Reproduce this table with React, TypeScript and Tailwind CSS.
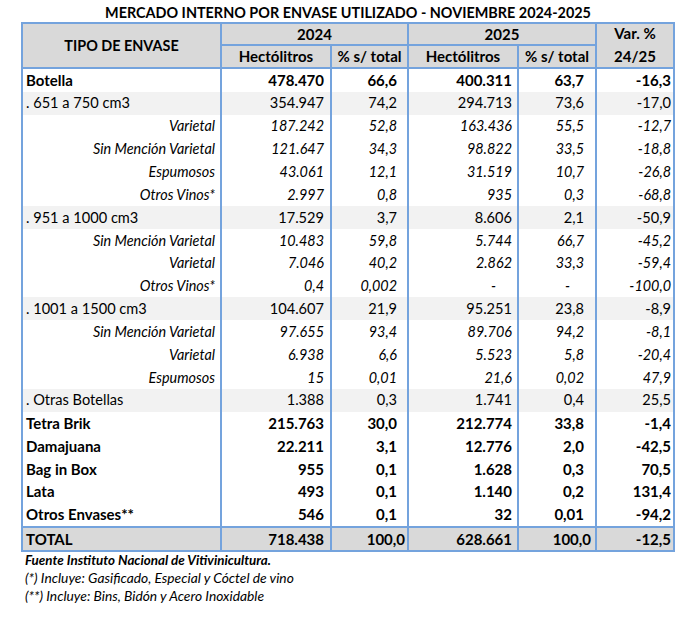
import React from "react";

type Row = { label: string; kind: "main" | "sub" | "it"; v: string[] };

const rows: Row[] = [
  { label: "Botella", kind: "main", v: ["478.470", "66,6", "400.311", "63,7", "-16,3"] },
  { label: ". 651 a 750 cm3", kind: "sub", v: ["354.947", "74,2", "294.713", "73,6", "-17,0"] },
  { label: "Varietal", kind: "it", v: ["187.242", "52,8", "163.436", "55,5", "-12,7"] },
  { label: "Sin Mención Varietal", kind: "it", v: ["121.647", "34,3", "98.822", "33,5", "-18,8"] },
  { label: "Espumosos", kind: "it", v: ["43.061", "12,1", "31.519", "10,7", "-26,8"] },
  { label: "Otros Vinos*", kind: "it", v: ["2.997", "0,8", "935", "0,3", "-68,8"] },
  { label: ". 951 a 1000 cm3", kind: "sub", v: ["17.529", "3,7", "8.606", "2,1", "-50,9"] },
  { label: "Sin Mención Varietal", kind: "it", v: ["10.483", "59,8", "5.744", "66,7", "-45,2"] },
  { label: "Varietal", kind: "it", v: ["7.046", "40,2", "2.862", "33,3", "-59,4"] },
  { label: "Otros Vinos*", kind: "it", v: ["0,4", "0,002", "-", "-", "-100,0"] },
  { label: ". 1001 a 1500 cm3", kind: "sub", v: ["104.607", "21,9", "95.251", "23,8", "-8,9"] },
  { label: "Sin Mención Varietal", kind: "it", v: ["97.655", "93,4", "89.706", "94,2", "-8,1"] },
  { label: "Varietal", kind: "it", v: ["6.938", "6,6", "5.523", "5,8", "-20,4"] },
  { label: "Espumosos", kind: "it", v: ["15", "0,01", "21,6", "0,02", "47,9"] },
  { label: ". Otras Botellas", kind: "sub", v: ["1.388", "0,3", "1.741", "0,4", "25,5"] },
  { label: "Tetra Brik", kind: "main", v: ["215.763", "30,0", "212.774", "33,8", "-1,4"] },
  { label: "Damajuana", kind: "main", v: ["22.211", "3,1", "12.776", "2,0", "-42,5"] },
  { label: "Bag in Box", kind: "main", v: ["955", "0,1", "1.628", "0,3", "70,5"] },
  { label: "Lata", kind: "main", v: ["493", "0,1", "1.140", "0,2", "131,4"] },
  { label: "Otros Envases**", kind: "main", v: ["546", "0,1", "32", "0,01", "-94,2"] },
];

const padR = ["pr-[6px]", "pr-[10px]", "pr-[5px]", "pr-[11px]", "pr-[2px]"];
const dashPad = ["pr-[6px]", "pr-[10px]", "pr-[21px]", "pr-[25px]", "pr-[2px]"];

export default function App() {
  return (
    <div className="w-[693px] h-[618px] bg-white text-black pl-[21px] pt-[3px] font-['Lato',sans-serif]">
      <div className="w-[654px] h-[19px] text-center font-bold text-[14.4px] leading-[19px]">
        MERCADO INTERNO POR ENVASE UTILIZADO - NOVIEMBRE 2024-2025
      </div>
      <div className="w-[654px] border-2 border-[#74a3dd]">
        {/* header */}
        <div className="grid grid-cols-[197px_110px_77px_110px_78px_78px] grid-rows-[22px_23px] bg-[#d9d9d9] font-bold text-[15px]">
          <div className="row-span-2 border-b-2 border-[#74a3dd] flex items-center justify-center text-[14.4px]">TIPO DE ENVASE</div>
          <div className="col-span-2 border-l-2 border-b-2 border-[#74a3dd] flex items-center justify-center">2024</div>
          <div className="col-span-2 border-l-2 border-b-2 border-[#74a3dd] flex items-center justify-center">2025</div>
          <div className="row-span-2 border-l-2 border-b-2 border-[#74a3dd] flex flex-col items-center justify-center leading-[23px] pb-[1px]">
            <span>Var. %</span>
            <span>24/25</span>
          </div>
          <div className="border-l-2 border-b-2 border-[#74a3dd] flex items-center justify-center">Hectólitros</div>
          <div className="border-l-2 border-b-2 border-[#74a3dd] flex items-center justify-center">% s/ total</div>
          <div className="border-l-2 border-b-2 border-[#74a3dd] flex items-center justify-center">Hectólitros</div>
          <div className="border-l-2 border-b-2 border-[#74a3dd] flex items-center justify-center">% s/ total</div>
        </div>
        {/* body */}
        {rows.map((r, i) => {
          const text =
            r.kind === "main"
              ? "font-bold text-[15px]"
              : r.kind === "sub"
              ? "text-[14.6px]"
              : "italic text-[14.4px]";
          const bg = r.kind === "sub" ? "bg-[#f2f2f2]" : "bg-white";
          return (
            <div
              key={i}
              className={`grid grid-cols-[197px_110px_77px_110px_78px_78px] h-[22.85px] ${bg} ${text}`}
            >
              <div
                className={`flex items-center ${
                  r.kind === "it" ? "justify-end pr-[5px]" : "justify-start pl-[3px]"
                }`}
              >
                {r.label}
              </div>
              {r.v.map((v, j) => (
                <div
                  key={j}
                  className={`border-l-2 border-[#74a3dd] flex items-center justify-end ${
                    v === "-" ? dashPad[j] : padR[j]
                  }`}
                >
                  {v}
                </div>
              ))}
            </div>
          );
        })}
        {/* total */}
        <div className="grid grid-cols-[197px_110px_77px_110px_78px_78px] h-[24px] border-t-2 border-[#74a3dd] bg-[#d9d9d9] font-bold text-[15px]">
          <div className="flex items-center pl-[3px]">TOTAL</div>
          {["718.438", "100,0", "628.661", "100,0", "-12,5"].map((v, j) => (
            <div
              key={j}
              className={`border-l-2 border-[#74a3dd] flex items-center justify-end ${
                j === 1 ? "pr-[2px]" : j === 3 ? "pr-[4px]" : padR[j]
              }`}
            >
              {v}
            </div>
          ))}
        </div>
      </div>
      <div className="pl-[4px] leading-[17.5px] italic">
        <div className="font-bold text-[13.4px]">Fuente Instituto Nacional de Vitivinicultura.</div>
        <div className="text-[13.8px]">(*) Incluye: Gasificado, Especial y Cóctel de vino</div>
        <div className="text-[13.8px]">(**) Incluye: Bins, Bidón y Acero Inoxidable</div>
      </div>
    </div>
  );
}
